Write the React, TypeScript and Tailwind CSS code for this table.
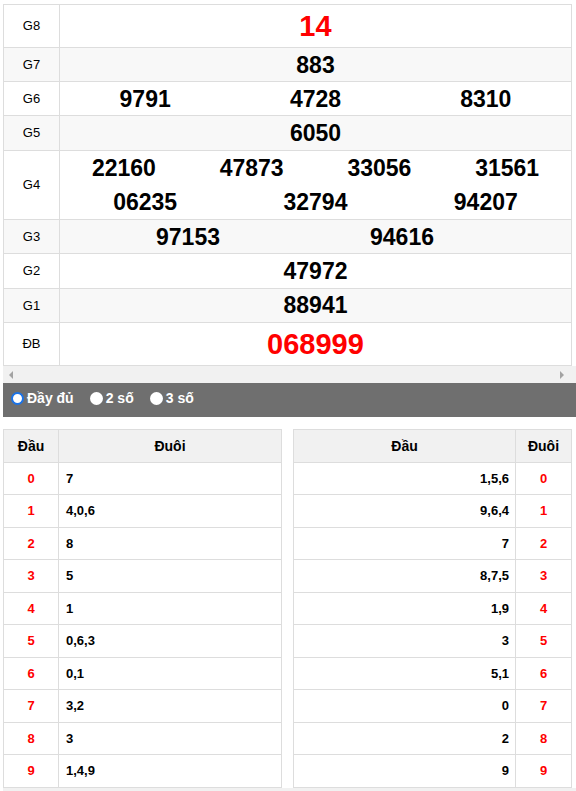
import React from "react";

const font = { fontFamily: '"Liberation Sans", Arial, sans-serif' };

type Row = { label: string; h: string; bg: string; content: React.ReactNode };

const Num = ({ children, red }: { children: React.ReactNode; red?: boolean }) => (
  <span className={red ? "text-[29px] font-bold text-[#ff0000] leading-none" : "text-[23px] font-bold text-black leading-none"}>{children}</span>
);

export default function App() {
  const rows: Row[] = [
    { label: "G8", h: "h-[43px]", bg: "bg-white", content: <div className="flex h-full items-center justify-center pt-[1px]"><Num red>14</Num></div> },
    { label: "G7", h: "h-[34px]", bg: "bg-[#f8f8f8]", content: <div className="flex h-full items-center justify-center pt-[1px]"><Num>883</Num></div> },
    {
      label: "G6", h: "h-[34px]", bg: "bg-white",
      content: (
        <div className="grid h-full grid-cols-3 items-center text-center pt-[1px]">
          <Num>9791</Num><Num>4728</Num><Num>8310</Num>
        </div>
      ),
    },
    { label: "G5", h: "h-[35px]", bg: "bg-[#f8f8f8]", content: <div className="flex h-full items-center justify-center pt-[1px]"><Num>6050</Num></div> },
    {
      label: "G4", h: "h-[69px]", bg: "bg-white",
      content: (
        <div className="flex h-full flex-col justify-center gap-[11px]">
          <div className="grid grid-cols-4 text-center">
            <Num>22160</Num><Num>47873</Num><Num>33056</Num><Num>31561</Num>
          </div>
          <div className="grid grid-cols-3 text-center">
            <Num>06235</Num><Num>32794</Num><Num>94207</Num>
          </div>
        </div>
      ),
    },
    {
      label: "G3", h: "h-[34px]", bg: "bg-[#f8f8f8]",
      content: (
        <div className="grid h-full grid-cols-[256px_172px] items-center text-center pt-[1px]">
          <Num>97153</Num><Num>94616</Num>
        </div>
      ),
    },
    { label: "G2", h: "h-[35px]", bg: "bg-white", content: <div className="flex h-full items-center justify-center"><Num>47972</Num></div> },
    { label: "G1", h: "h-[34px]", bg: "bg-[#f8f8f8]", content: <div className="flex h-full items-center justify-center"><Num>88941</Num></div> },
    { label: "ĐB", h: "h-[43px]", bg: "bg-white", content: <div className="flex h-full items-center justify-center"><Num red>068999</Num></div> },
  ];

  const left = [
    ["0", "7"], ["1", "4,0,6"], ["2", "8"], ["3", "5"], ["4", "1"],
    ["5", "0,6,3"], ["6", "0,1"], ["7", "3,2"], ["8", "3"], ["9", "1,4,9"],
  ];
  const right = [
    ["1,5,6", "0"], ["9,6,4", "1"], ["7", "2"], ["8,7,5", "3"], ["1,9", "4"],
    ["3", "5"], ["5,1", "6"], ["0", "7"], ["2", "8"], ["9", "9"],
  ];
  const rowH = ["h-[32px]", "h-[33px]"];

  return (
    <div className="w-[576px] h-[791px] overflow-hidden bg-white" style={font}>
      <div className="pt-[4px] pl-[3px]">
        <div className="w-[569px] border border-[#dddddd] border-b-0">
          {rows.map((r, i) => (
            <div key={i} className={`flex ${r.h} ${r.bg} border-b border-[#dddddd]`}>
              <div className="flex w-[56px] shrink-0 items-center justify-center border-r border-[#dddddd] text-[13px] text-black">
                {r.label}
              </div>
              <div className="flex-1">{r.content}</div>
            </div>
          ))}
        </div>
        <div className="relative h-[17px] w-[573px] bg-[#f1f1f1]">
          <div className="absolute left-[6px] top-[5px] h-0 w-0 border-y-[4px] border-r-[4px] border-y-transparent border-r-[#a3a3a3]" />
          <div className="absolute left-[557px] top-[5px] h-0 w-0 border-y-[4px] border-l-[4px] border-y-transparent border-l-[#a3a3a3]" />
        </div>
        <div className="flex h-[34px] w-[573px] items-center bg-[#6f6f6f] pb-[3px] pl-[8px] text-[14px] font-bold text-white">
          <span className="mr-[3px] box-border inline-block h-[13px] w-[13px] rounded-full border-[2px] border-[#1a73e8] bg-white" />
          <span className="mr-[16px]">Đầy đủ</span>
          <span className="mr-[3px] inline-block h-[13px] w-[13px] rounded-full bg-white" />
          <span className="mr-[16px]">2 số</span>
          <span className="mr-[3px] inline-block h-[13px] w-[13px] rounded-full bg-white" />
          <span>3 số</span>
        </div>
        <div className="mt-[12px] flex gap-[11px]">
          <div className="w-[279px] border border-[#dddddd] border-b-0">
            <div className="flex h-[33px] bg-[#f1f1f1] border-b border-[#dddddd] text-[14px] font-bold text-black">
              <div className="flex w-[55px] items-center justify-center border-r border-[#dddddd]">Đầu</div>
              <div className="flex flex-1 items-center justify-center">Đuôi</div>
            </div>
            {left.map(([a, b], i) => (
              <div key={i} className={`flex ${rowH[i % 2]} border-b border-[#dddddd] text-[13px] font-bold`}>
                <div className="flex w-[55px] items-center justify-center border-r border-[#dddddd] text-[#ff0000]">{a}</div>
                <div className="flex flex-1 items-center pl-[7px] text-black">{b}</div>
              </div>
            ))}
          </div>
          <div className="w-[279px] border border-[#dddddd] border-b-0">
            <div className="flex h-[33px] bg-[#f1f1f1] border-b border-[#dddddd] text-[14px] font-bold text-black">
              <div className="flex flex-1 items-center justify-center border-r border-[#dddddd]">Đầu</div>
              <div className="flex w-[55px] items-center justify-center">Đuôi</div>
            </div>
            {right.map(([a, b], i) => (
              <div key={i} className={`flex ${rowH[i % 2]} border-b border-[#dddddd] text-[13px] font-bold`}>
                <div className="flex flex-1 items-center justify-end border-r border-[#dddddd] pr-[6px] text-black">{a}</div>
                <div className="flex w-[55px] items-center justify-center text-[#ff0000]">{b}</div>
              </div>
            ))}
          </div>
        </div>
        <div className="h-[10px] w-[573px] bg-[#f1f1f1]" />
      </div>
    </div>
  );
}
